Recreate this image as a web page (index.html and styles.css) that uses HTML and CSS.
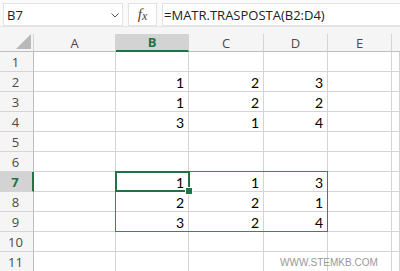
FILE: index.html
```html
<!DOCTYPE html>
<html lang="it">
<head>
    <meta charset="UTF-8" />
    <title>MATR.TRASPOSTA</title>
    <link rel="stylesheet" href="styles.css">
</head>
<body>
    <div class="toolbar">
        <div class="name-box">
            <span>B7</span>
            <svg class="chevron" width="8" height="5" viewBox="0 0 8 5"><path d="M0.5 0.5 L4 4 L7.5 0.5" fill="none" stroke="#555" stroke-width="1"/></svg>
        </div>
        <div class="fx-box"><i>f</i><i class="x">x</i></div>
        <div class="formula">=MATR.TRASPOSTA(B2:D4)</div>
    </div>

    <div class="sheet">
        <!-- header row -->
        <div class="corner"><span class="tri"></span></div>
        <div class="col-head">A</div>
        <div class="col-head active">B</div>
        <div class="col-head">C</div>
        <div class="col-head">D</div>
        <div class="col-head">E</div>
        <div class="col-head last"></div>

        <div class="row-head">1</div><div class="cell"></div><div class="cell"></div><div class="cell"></div><div class="cell"></div><div class="cell"></div><div class="cell"></div>
        <div class="row-head">2</div><div class="cell"></div><div class="cell">1</div><div class="cell">2</div><div class="cell">3</div><div class="cell"></div><div class="cell"></div>
        <div class="row-head">3</div><div class="cell"></div><div class="cell">1</div><div class="cell">2</div><div class="cell">2</div><div class="cell"></div><div class="cell"></div>
        <div class="row-head">4</div><div class="cell"></div><div class="cell">3</div><div class="cell">1</div><div class="cell">4</div><div class="cell"></div><div class="cell"></div>
        <div class="row-head">5</div><div class="cell"></div><div class="cell"></div><div class="cell"></div><div class="cell"></div><div class="cell"></div><div class="cell"></div>
        <div class="row-head">6</div><div class="cell"></div><div class="cell"></div><div class="cell"></div><div class="cell"></div><div class="cell"></div><div class="cell"></div>
        <div class="row-head active">7</div><div class="cell"></div><div class="cell">1</div><div class="cell">1</div><div class="cell">3</div><div class="cell"></div><div class="cell"></div>
        <div class="row-head">8</div><div class="cell"></div><div class="cell">2</div><div class="cell">2</div><div class="cell">1</div><div class="cell"></div><div class="cell"></div>
        <div class="row-head">9</div><div class="cell"></div><div class="cell">3</div><div class="cell">2</div><div class="cell">4</div><div class="cell"></div><div class="cell"></div>
        <div class="row-head">10</div><div class="cell"></div><div class="cell"></div><div class="cell"></div><div class="cell"></div><div class="cell"></div><div class="cell"></div>
        <div class="row-head">11</div><div class="cell"></div><div class="cell"></div><div class="cell"></div><div class="cell"></div><div class="cell"></div><div class="cell"></div>

        <!-- selections over the grid -->
        <div class="range"></div>
        <div class="active-cell"><span class="handle"></span></div>
        <div class="watermark">WWW.STEMKB.COM</div>
    </div>
</body>
</html>
```

FILE: styles.css
```css
* {
    box-sizing: border-box;
}

body {
    margin: 0;
    width: 400px;
    height: 271px;
    overflow: hidden;
    background: #f5f5f5;
    font-family: "Open Sans", "Noto Sans", sans-serif;
}

.toolbar {
    display: flex;
    height: 27px;
    padding: 3px 0 0 3px;
    background: #fafafa;
    border-bottom: 1px solid #e4e4e4;
}

.name-box,
.fx-box,
.formula {
    height: 23px;
    background: #fff;
    border: 1px solid #e3e3e3;
    display: flex;
    align-items: center;
}

.name-box {
    width: 120px;
    padding: 0 3px 0 3px;
    justify-content: space-between;
    font-size: 13px;
    color: #222;
}

.chevron {
    margin-top: 1px;
}

.fx-box {
    width: 29px;
    margin-left: 5px;
    justify-content: center;
    font-family: "Liberation Serif", serif;
    font-size: 15px;
    color: #444;
}

.fx-box .x {
    font-size: 12px;
    margin-top: 4px;
}

.formula {
    flex: 1;
    margin-left: 5px;
    border-right: none;
    padding-left: 1px;
    font-size: 13px;
    color: #222;
}

.sheet {
    position: relative;
    display: grid;
    grid-template-columns: 34px 82px 73px 75px 64px 64px 8px;
    grid-template-rows: 18px repeat(11, 20px);
    margin-top: 7px;
}

.corner {
    border-right: 1px solid #d4d4d4;
    border-bottom: 1px solid #bdbdbd;
    position: relative;
}

.tri {
    position: absolute;
    right: 2px;
    bottom: 2px;
    width: 0;
    height: 0;
    border-left: 15px solid transparent;
    border-bottom: 15px solid #b9b9b9;
}

.col-head {
    display: flex;
    align-items: center;
    justify-content: center;
    font-size: 13px;
    color: #4a4a4a;
    border-right: 1px solid #d4d4d4;
    border-bottom: 1px solid #bdbdbd;
}

.col-head.last {
    border-right: none;
}

.col-head.active {
    background: #d3d3d3;
    color: #217346;
    font-weight: bold;
    border-bottom: 2px solid #217346;
}

.row-head {
    display: flex;
    align-items: center;
    justify-content: center;
    padding-right: 2px;
    font-size: 13px;
    color: #4a4a4a;
    border-right: 1px solid #bdbdbd;
    border-bottom: 1px solid #d4d4d4;
}

.row-head.active {
    background: #d3d3d3;
    color: #217346;
    font-weight: bold;
    border-right: 2px solid #217346;
}

.cell {
    background: #fff;
    border-right: 1px solid #d4d4d4;
    border-bottom: 1px solid #d4d4d4;
    text-align: right;
    padding: 2px 4px 0 0;
    font-family: "Lato", "Liberation Sans", sans-serif;
    font-size: 14px;
    line-height: 17px;
    color: #000;
}

/* absolute children of the grid use their grid area as containing block */
.range {
    position: absolute;
    grid-column: 3 / 6;
    grid-row: 8 / 11;
    top: -1px;
    left: -1px;
    right: 0;
    bottom: 0;
    box-shadow: inset 0 0 0 1px #2f6fe8;
}

.active-cell {
    position: absolute;
    grid-column: 3 / 4;
    grid-row: 8 / 9;
    top: -1px;
    left: -1px;
    right: -1px;
    bottom: 0;
    border: 2px solid #217346;
}

.handle {
    position: absolute;
    right: -4px;
    bottom: -4px;
    width: 6px;
    height: 6px;
    background: #217346;
    outline: 1px solid #fff;
}

.watermark {
    position: absolute;
    left: 280px;
    top: 223px;
    font-family: "Liberation Sans", sans-serif;
    font-size: 10px;
    color: #999;
}
```
